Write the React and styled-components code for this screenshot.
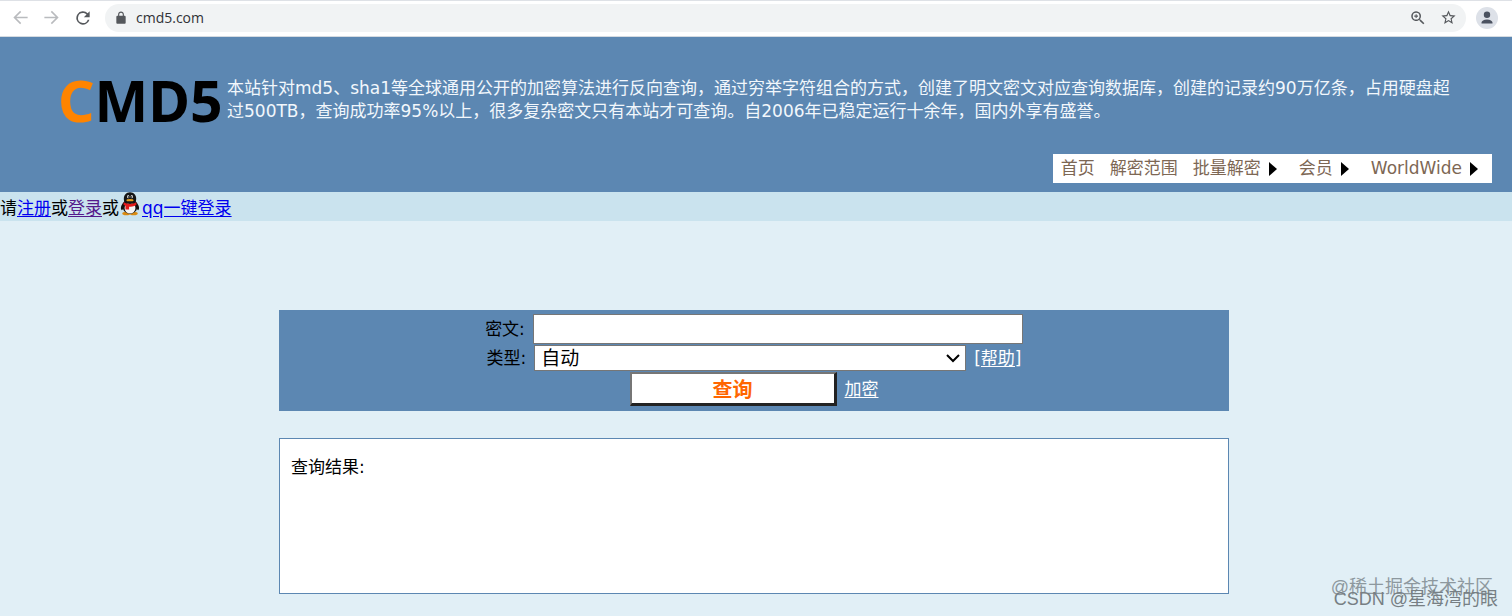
import React from 'react';
import styled, { createGlobalStyle } from 'styled-components';

const Global = createGlobalStyle`
  * { box-sizing: border-box; }
  body {
    margin: 0;
    background: #e1eff6;
    color: #000;
    font: 17px/23px "DejaVu Sans", "Noto Sans CJK SC", sans-serif;
    font-weight: 400;
  }
`;

const Page = styled.div`
  position: relative;
  min-height: 100vh;
  padding-bottom: 22px;
  overflow: hidden;
`;

const Browser = styled.div`
  display: flex;
  align-items: center;
  height: 37px;
  padding: 0 14px 2px 11px;
  background: #fff;
  border-top: 1px solid #dee1e6;
  border-bottom: 1px solid #d5dbe1;
`;

const IconButton = styled.button`
  display: flex;
  padding: 0;
  margin: 0 ${p => p.$gap || 12}px 0 0;
  border: 0;
  background: none;
  color: ${p => (p.$off ? '#b9bbbe' : '#55585c')};
`;

const Address = styled.div`
  flex: 1;
  display: flex;
  align-items: center;
  height: 28px;
  padding: 0 8px 0 9px;
  border-radius: 14px;
  background: #f1f3f4;
  color: #55585c;
`;

const Url = styled.input`
  flex: 1;
  min-width: 0;
  margin-left: 8px;
  padding: 0;
  border: 0;
  background: none;
  color: #303236;
  font: 14px/20px "Open Sans", sans-serif;
`;

const Avatar = styled.button`
  display: flex;
  padding: 0;
  margin-left: 10px;
  border: 0;
  border-radius: 50%;
  background: #dde1e8;
  color: #4b5260;
`;

const Header = styled.header`
  padding: 40px 20px 9px 58px;
  background: #5c87b2;
`;

const Intro = styled.div`
  display: flex;
  align-items: flex-start;
`;

const Logo = styled.a`
  flex: none;
  width: 169px;
  color: #000;
  font: bold 57px/46px "Noto Sans", sans-serif;
  text-decoration: none;
`;

const LogoInitial = styled.span`
  color: #ff8400;
`;

const About = styled.p`
  flex: 1;
  margin: 0;
  padding-right: 30px;
  color: #f2f7fc;
`;

const Nav = styled.nav`
  display: flex;
  width: fit-content;
  margin: 31px 0 0 auto;
  padding: 0 14px 0 8px;
  gap: 15px;
  background: #fff;
  line-height: 29px;
`;

const NavLink = styled.a`
  display: flex;
  align-items: center;
  gap: 8px;
  margin-right: ${p => (p.$menu ? 7 : 0)}px;
  color: #7d6754;
  text-decoration: none;
  &:last-child { margin-right: 0; }
`;

const LoginBar = styled.div`
  display: flex;
  align-items: flex-start;
  height: 29px;
  background: #cae3ee;
  line-height: 32px;
`;

const Link = styled.a`
  color: ${p => p.$color || '#0000ee'};
  text-underline-offset: 2px;
`;

const Content = styled.main`
  padding: 89px 4px 0 0;
`;

const Panels = styled.div`
  width: 63%;
  min-width: 580px;
  margin: 0 auto;
`;

const Form = styled.form`
  display: flex;
  flex-direction: column;
  align-items: center;
  gap: 1px;
  padding: 4px 0 5px;
  background: #5c87b2;
`;

const Row = styled.div`
  display: flex;
  align-items: center;
  gap: 8px;
`;

const TextField = styled.input`
  width: 490px;
  height: 30px;
  border: 1px solid #767676;
  background: #fff;
  font: 20px "DejaVu Sans", "Noto Sans CJK SC", sans-serif;
`;

const SelectWrap = styled.div`
  position: relative;
  width: 432px;
  height: 26px;
`;

const Select = styled.select`
  appearance: none;
  width: 100%;
  height: 100%;
  padding: 0 6px;
  border: 1px solid #767676;
  border-radius: 0;
  background: #fff;
  color: #000;
  font: 19px/24px "DejaVu Sans", "Noto Sans CJK SC", sans-serif;
`;

const Chevron = styled.svg`
  position: absolute;
  right: 5px;
  top: 8px;
  pointer-events: none;
`;

const Submit = styled.button`
  width: 207px;
  height: 34px;
  padding: 2px 0 0;
  border: 2px solid;
  border-right-width: 3px;
  border-bottom-width: 3px;
  border-color: #767676 #222 #222 #767676;
  background: #fff;
  color: #ff6600;
  font: bold 20px/26px "DejaVu Sans", "Noto Sans CJK SC", sans-serif;
`;

const Result = styled.section`
  min-height: 156px;
  margin-top: 27px;
  padding: 17px 11px;
  border: 1px solid #5c87b2;
  background: #fff;
`;

const Mark = styled.span`
  position: absolute;
  right: ${p => p.$right}px;
  bottom: ${p => p.$bottom}px;
  color: ${p => p.$color};
  font: 18px/24px "Liberation Sans", "Noto Sans CJK SC", sans-serif;
  white-space: nowrap;
`;

const Arrow = () => (
  <svg width="8" height="14" viewBox="0 0 8 14" aria-hidden="true">
    <path d="M0 0 8 7 0 14z" fill="#000" />
  </svg>
);

const Glyph = ({ d, size = 20 }) => (
  <svg width={size} height={size} viewBox="0 0 24 24" fill="currentColor" aria-hidden="true">
    <path d={d} />
  </svg>
);

const PenguinArt = styled.svg`
  margin: 0 2px 0 1px;
`;

const Penguin = () => (
  <PenguinArt width="20" height="24" viewBox="0 0 22 26" aria-hidden="true">
    <ellipse cx="7" cy="23.5" rx="4.500" ry="2" fill="#d98a10" />
    <ellipse cx="15" cy="23.500" rx="4.500" ry="2" fill="#d98a10" />
    <path d="M5 10C1 14 0 18 2 20l3-3zM17 10c4 4 5 8 3 10l-3-3z" fill="#111" />
    <ellipse cx="11" cy="16" rx="8" ry="8" fill="#111" />
    <ellipse cx="11" cy="17.500" rx="6" ry="6" fill="#f4f4f4" />
    <path d="M4.500 10C3 3 7 0 11 0s8 3 6.500 10c-1 4-12 4-13 0z" fill="#151515" />
    <ellipse cx="9" cy="5" rx="1.300" ry="1.800" fill="#ddd" />
    <ellipse cx="13" cy="5" rx="1.300" ry="1.800" fill="#ddd" />
    <circle cx="9.300" cy="5.300" r=".7" />
    <circle cx="12.700" cy="5.300" r=".7" />
    <ellipse cx="11" cy="8.800" rx="4" ry="1.300" fill="#e8a020" />
    <path d="M4 11c4 2.500 10 2.500 14 0v3c-3 2-6 2-8 2v3H6v-4l-2-1z" fill="#e21b1b" />
  </PenguinArt>
);

export default function App() {
  return (
    <Page>
      <Global />
      <Browser>
        <IconButton type="button" aria-label="Back" $off><Glyph size={19} d="M21 11H6.8l6.1-6.1L11.500 3.500 3 12l8.500 8.500 1.400-1.400L6.800 13H21z" /></IconButton>
        <IconButton type="button" aria-label="Forward" $off><Glyph size={19} d="M3 11h14.200l-6.100-6.100 1.400-1.400L21 12l-8.500 8.500-1.400-1.400 6.100-6.100H3z" /></IconButton>
        <IconButton type="button" aria-label="Reload"><Glyph d="M17.650 6.350A8 8 0 1 0 19.730 14h-2.080A6 6 0 1 1 12 6c1.660 0 3.140.69 4.220 1.780L13 11h7V4z" /></IconButton>
        <Address>
          <Glyph size={14} d="M18 8h-1V6c0-2.760-2.240-5-5-5S7 3.240 7 6v2H6c-1.100 0-2 .9-2 2v10c0 1.100.9 2 2 2h12c1.100 0 2-.9 2-2V10c0-1.100-.9-2-2-2zM9 8V6c0-1.660 1.340-3 3-3s3 1.340 3 3v2z" />
          <Url aria-label="Address" defaultValue="cmd5.com" />
          <IconButton type="button" aria-label="Zoom" $gap={13}><Glyph size={18} d="M15.500 14h-.79l-.28-.27A6.500 6.500 0 1 0 13.730 14.430l.27.28v.79l5 4.990L20.490 19zM9.500 14A4.500 4.500 0 1 1 9.500 5a4.500 4.500 0 0 1 0 9zM10.200 7H8.800v1.800H7v1.400h1.800V12h1.400v-1.800H12V8.800h-1.800z" /></IconButton>
          <IconButton type="button" aria-label="Bookmark" $gap={1}><Glyph size={17} d="m22 9.240-7.190-.62L12 2 9.190 8.630 2 9.240l5.460 4.730L5.820 21 12 17.270 18.180 21l-1.630-7.030zM12 15.400l-3.760 2.270 1-4.280-3.320-2.880 4.380-.38L12 6.100l1.710 4.040 4.380.38-3.320 2.880 1 4.280z" /></IconButton>
        </Address>
        <Avatar type="button" aria-label="Profile"><Glyph size={22} d="M12 12a3.500 3.500 0 1 0 0-7 3.500 3.500 0 0 0 0 7zm0 1.500c-3.500 0-6 1.500-6 3.500v1h12v-1c0-2-2.500-3.500-6-3.500z" /></Avatar>
      </Browser>
      <Header>
        <Intro>
          <Logo href="#"><LogoInitial>C</LogoInitial>MD5</Logo>
          <About>本站针对md5、sha1等全球通用公开的加密算法进行反向查询，通过穷举字符组合的方式，创建了明文密文对应查询数据库，创建的记录约90万亿条，占用硬盘超过500TB，查询成功率95%以上，很多复杂密文只有本站才可查询。自2006年已稳定运行十余年，国内外享有盛誉。</About>
        </Intro>
        <Nav>
          <NavLink href="#">首页</NavLink>
          <NavLink href="#">解密范围</NavLink>
          <NavLink href="#" $menu>批量解密<Arrow /></NavLink>
          <NavLink href="#" $menu>会员<Arrow /></NavLink>
          <NavLink href="#" $menu>WorldWide<Arrow /></NavLink>
        </Nav>
      </Header>
      <LoginBar>
        请<Link href="#">注册</Link>或<Link href="#" $color="#551a8b">登录</Link>或<Penguin /><Link href="#">qq一键登录</Link>
      </LoginBar>
      <Content>
        <Panels>
          <Form onSubmit={e => e.preventDefault()}>
            <Row>
              <label htmlFor="cipher">密文:</label>
              <TextField id="cipher" />
            </Row>
            <Row>
              <label htmlFor="kind">类型:</label>
              <SelectWrap>
                <Select id="kind"><option>自动</option></Select>
                <Chevron width="16" height="10" viewBox="0 0 16 10"><path d="m2 2 6 6 6-6" fill="none" stroke="#000" strokeWidth="2" /></Chevron>
              </SelectWrap>
              <Link href="#" $color="#fff">[帮助]</Link>
            </Row>
            <Row>
              <Submit>查询</Submit>
              <Link href="#" $color="#fff">加密</Link>
            </Row>
          </Form>
          <Result>查询结果:</Result>
        </Panels>
      </Content>
      <Mark $right={19} $bottom={17} $color="#8d989e">@稀土掘金技术社区</Mark>
      <Mark $right={14} $bottom={5} $color="#777f84">CSDN @星海湾的眼</Mark>
    </Page>
  );
}
